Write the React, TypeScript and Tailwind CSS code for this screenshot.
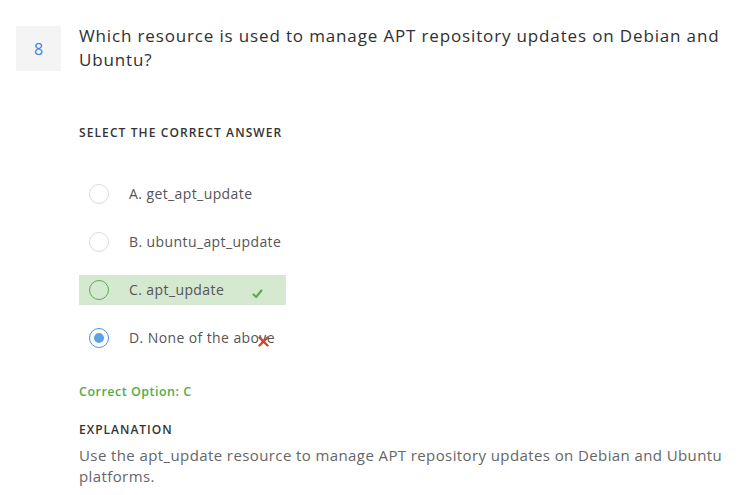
import React from 'react';

const options = [
  { key: 'A', text: 'get_apt_update' },
  { key: 'B', text: 'ubuntu_apt_update' },
  { key: 'C', text: 'apt_update', correct: true },
  { key: 'D', text: 'None of the above', selected: true },
];

function Radio({ state }: { state: 'idle' | 'correct' | 'selected' }) {
  if (state === 'correct') {
    return <span className="block h-5 w-5 rounded-full border-[1.5px] border-[#5aae4f]" />;
  }
  if (state === 'selected') {
    return (
      <span className="flex h-5 w-5 items-center justify-center rounded-full border-[1.5px] border-[#4a90e2]">
        <span className="h-[10px] w-[10px] rounded-full bg-[#5aa2e2]" />
      </span>
    );
  }
  return <span className="block h-5 w-5 rounded-full border border-[#dcdcdc]" />;
}

export default function App() {
  return (
    <div className="min-h-screen bg-white font-['Open_Sans',sans-serif] text-[#333]">
      <div className="flex gap-[18px] pl-4 pt-[26px] pr-6">
        <div className="flex h-[45px] w-[45px] flex-shrink-0 items-center justify-center bg-[#f4f4f4] text-[16px] text-[#3c82e8]">
          8
        </div>
        <p className="-mt-[2px] text-[17px] leading-[24px] tracking-[0.85px] text-[#2f3033]">
          Which resource is used to manage APT repository updates on Debian and Ubuntu?
        </p>
      </div>

      <div className="pl-[79px]">
        <h4 className="mt-[52px] text-[12px] font-semibold tracking-[1.1px] text-[#333]">
          SELECT THE CORRECT ANSWER
        </h4>

        <div className="mt-[37px] flex flex-col gap-[18px]">
          {options.map((o) => (
            <div
              key={o.key}
              className={`relative flex h-[30px] w-[207px] items-center ${o.correct ? 'bg-[#d5e8d0]' : ''}`}
            >
              <div className="ml-[10px] mr-[20px]">
                <Radio state={o.correct ? 'correct' : o.selected ? 'selected' : 'idle'} />
              </div>
              <span className="-mt-[2px] text-[14px] tracking-[0.4px] text-[#555]">
                {o.key}. {o.text}
              </span>
              {o.correct && (
                <svg className="absolute left-[173px] top-[14px]" width="11" height="10" viewBox="0 0 11 10">
                  <path d="M1.5 5.5 L4.2 8 L9.5 1.5" fill="none" stroke="#5aae4f" strokeWidth="2.2" strokeLinecap="round" strokeLinejoin="round" />
                </svg>
              )}
              {o.selected && (
                <svg className="absolute left-[179px] top-[13px]" width="11" height="11" viewBox="0 0 11 11">
                  <path d="M1.5 1.5 L9.5 9.5 M9.5 1.5 L1.5 9.5" stroke="#c9472f" strokeWidth="2.4" strokeLinecap="round" />
                </svg>
              )}
            </div>
          ))}
        </div>

        <p className="mt-[30px] text-[12.5px] font-semibold tracking-[0.5px] text-[#4fae4a]">Correct Option: C</p>

        <h4 className="mt-[19px] text-[12px] font-semibold tracking-[1px] text-[#333]">EXPLANATION</h4>

        <p className="mt-[6px] pr-4 text-[15px] leading-[21px] tracking-[0.4px] text-[#666]">
          Use the apt_update resource to manage APT repository updates on Debian and Ubuntu platforms.
        </p>
      </div>
    </div>
  );
}
